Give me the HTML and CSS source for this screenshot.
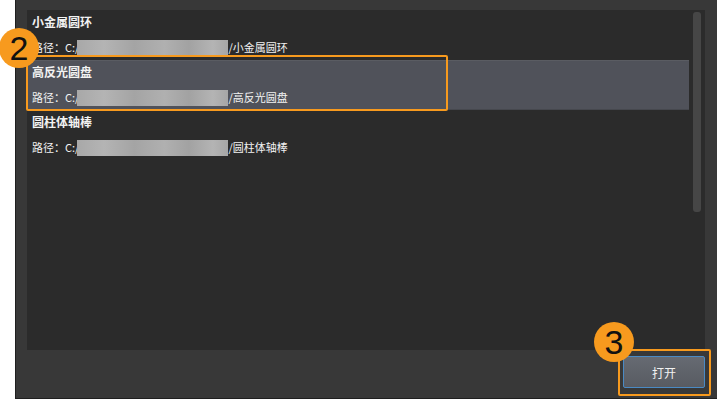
FILE: index.html
```html
<!DOCTYPE html>
<html lang="zh">
<head>
<meta charset="utf-8">
<title>打开</title>
<link rel="stylesheet" href="styles.css">
</head>
<body>
<div class="dialog">
  <div class="list">
    <div class="rows">
      <div class="row">
        <div class="name">小金属圆环</div>
        <div class="path">路径：C:/<span class="mask"></span>/小金属圆环</div>
      </div>
      <div class="row selected">
        <div class="name">高反光圆盘</div>
        <div class="path">路径：C:/<span class="mask"></span>/高反光圆盘</div>
      </div>
      <div class="row">
        <div class="name">圆柱体轴棒</div>
        <div class="path">路径：C:/<span class="mask"></span>/圆柱体轴棒</div>
      </div>
    </div>
    <div class="track"><div class="thumb"></div></div>
  </div>
  <div class="footer">
    <button class="open">打开</button>
  </div>
</div>
<div class="frame frame-row"></div>
<div class="frame frame-btn"></div>
<div class="badge badge-2">2</div>
<div class="badge badge-3">3</div>
</body>
</html>
```
FILE: styles.css
```css
html, body {
  margin: 0;
  padding: 0;
  height: 400px;
  overflow: hidden;
  background: #fff;
}
body {
  position: relative;
  font-family: "Noto Sans CJK SC", "Liberation Sans", sans-serif;
  padding-left: 15px;
  box-sizing: border-box;
}
.dialog {
  height: 399px;
  box-sizing: border-box;
  background: #383838;
  border-left: 1px solid #1f1f1f;
  border-bottom: 1px solid #1f1f1f;
  padding: 10px 12px 0 11px;
  display: flex;
  flex-direction: column;
}
.list {
  height: 340px;
  background: #2b2b2b;
  display: flex;
}
.rows {
  flex: 1;
  min-width: 0;
}
.row {
  height: 50px;
  box-sizing: border-box;
  padding: 4px 0 0 5px;
  color: #f2f2f2;
  font-size: 11px;
}
.row.selected {
  background: #50525a;
  border-top: 1px solid #5a5c62;
  border-bottom: 1px solid #46484e;
  padding-top: 3px;
}
.name {
  font-weight: 700;
  font-size: 12px;
  line-height: 16px;
  height: 26px;
}
.path {
  display: flex;
  align-items: flex-start;
  height: 16px;
  line-height: 14px;
  white-space: pre;
}
.mask {
  width: 151px;
  height: 16px;
  margin-left: -2px;
  background: linear-gradient(90deg, #a8a8a8, #b4b4b4 18%, #a4a4a4 38%, #b0b0b0 58%, #a2a2a2 74%, #b4b4b4 90%, #a6a6a6);
}
.track {
  width: 16px;
  flex: none;
  padding: 2px 4px;
  box-sizing: border-box;
}
.thumb {
  height: 200px;
  background: #464646;
  border-radius: 3px;
}
.footer {
  flex: 1;
  display: flex;
  justify-content: flex-end;
  align-items: flex-start;
  padding-top: 6px;
}
.open {
  width: 82px;
  height: 32px;
  box-sizing: border-box;
  border: 1px solid #4a8ac4;
  border-radius: 2px;
  background: linear-gradient(#666a72, #585b62);
  color: #f2f2f2;
  font: 12px "Noto Sans CJK SC", "Liberation Sans", sans-serif;
  padding: 0;
}
.frame {
  position: absolute;
  box-sizing: border-box;
  border: 2px solid #f79a1e;
  border-radius: 2px;
}
.frame-row {
  left: 26px;
  top: 55px;
  width: 422px;
  height: 56px;
}
.frame-btn {
  left: 618px;
  top: 349px;
  width: 93px;
  height: 47px;
}
.badge {
  position: absolute;
  width: 40px;
  height: 40px;
  border-radius: 50%;
  background: #f79a1e;
  color: #111;
  font: 34px/40px "Liberation Sans", sans-serif;
  text-align: center;
}
.badge-2 {
  left: -1px;
  top: 28px;
}
.badge-3 {
  left: 594px;
  top: 322px;
}
```
